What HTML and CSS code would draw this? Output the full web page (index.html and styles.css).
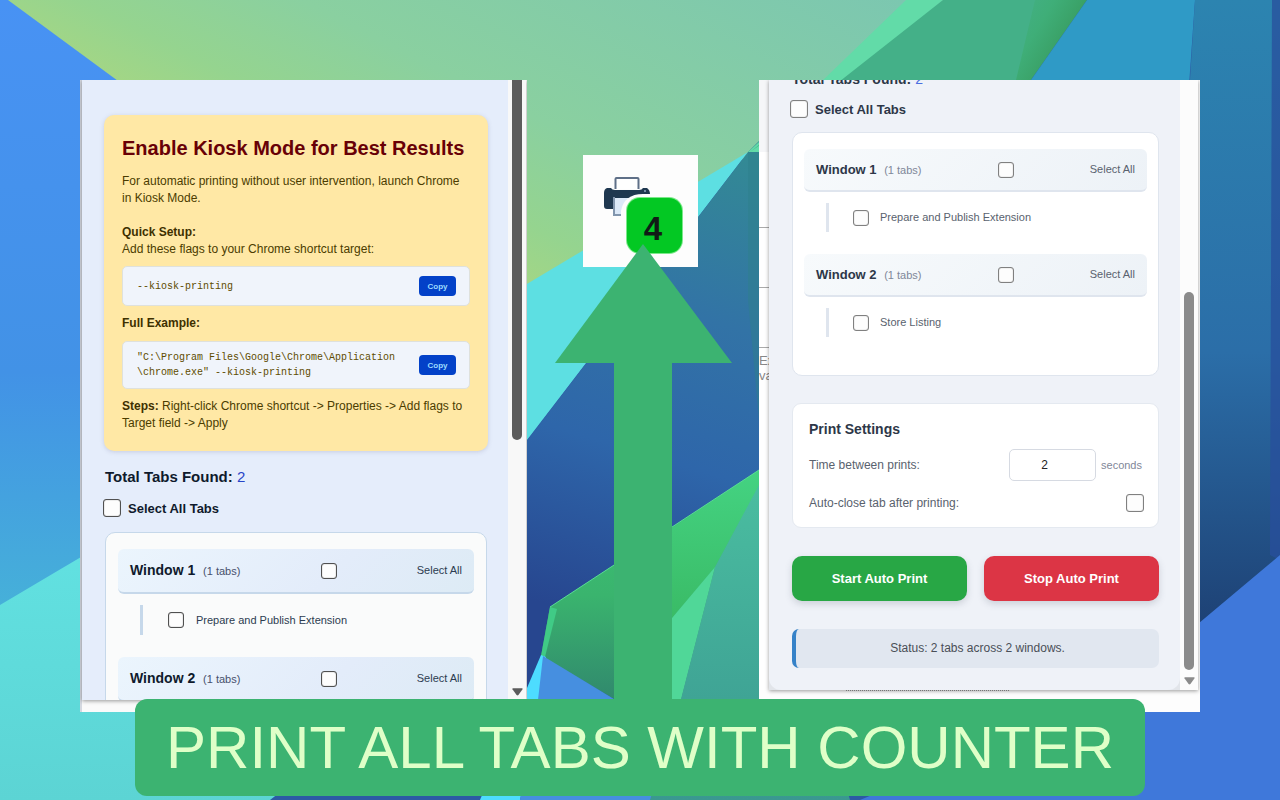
FILE: index.html
```html
<!DOCTYPE html>
<html lang="en">
<head>
<meta charset="utf-8">
<title>Print All Tabs with Counter</title>
<link rel="stylesheet" href="styles.css">
</head>
<body>
<svg class="wallpaper" viewBox="0 0 1280 800" preserveAspectRatio="none" aria-hidden="true">
  <defs>
    <linearGradient id="sky" x1="0" y1="0" x2="0" y2="1"><stop offset="0" stop-color="#4892f4"/><stop offset=".6" stop-color="#4292e6"/><stop offset="1" stop-color="#46b2d8"/></linearGradient>
    <linearGradient id="aqua" x1="0" y1="0" x2="0" y2="1"><stop offset="0" stop-color="#62e2e2"/><stop offset="1" stop-color="#5cd4d4"/></linearGradient>
    <linearGradient id="lime" gradientUnits="userSpaceOnUse" x1="900" y1="0" x2="700" y2="400"><stop offset="0" stop-color="#7cc7b0"/><stop offset=".6" stop-color="#8ad0a0"/><stop offset=".82" stop-color="#95d48f"/><stop offset=".95" stop-color="#a3d685"/></linearGradient>
    <linearGradient id="deep" gradientUnits="userSpaceOnUse" x1="740" y1="150" x2="600" y2="620"><stop offset="0" stop-color="#338a94"/><stop offset=".35" stop-color="#3273a6"/><stop offset=".65" stop-color="#2e66aa"/><stop offset="1" stop-color="#27468f"/></linearGradient>
    <linearGradient id="edge" x1="0" y1="0" x2="0" y2="1"><stop offset="0" stop-color="#2c84b0"/><stop offset=".55" stop-color="#2b6ea8"/><stop offset="1" stop-color="#1d3f72"/></linearGradient>
    <linearGradient id="shard" x1="0" y1="0" x2="0" y2="1"><stop offset="0" stop-color="#3cc474"/><stop offset=".5" stop-color="#3ab46e"/><stop offset="1" stop-color="#2f806d"/></linearGradient>
    <linearGradient id="leaf" x1="0" y1="0" x2="0" y2="1"><stop offset="0" stop-color="#44d382"/><stop offset="1" stop-color="#3abb66"/></linearGradient>
    <linearGradient id="teal" x1="0" y1="0" x2="0" y2="1"><stop offset="0" stop-color="#4abda0"/><stop offset="1" stop-color="#3a9890"/></linearGradient>
    <linearGradient id="rim" gradientUnits="userSpaceOnUse" x1="1000" y1="20" x2="1062" y2="58"><stop offset="0" stop-color="#44b088"/><stop offset=".5" stop-color="#3fae78"/><stop offset="1" stop-color="#389c60"/></linearGradient>
  </defs>
  <rect width="1280" height="800" fill="#2c5aa4"/>
  <polygon points="0,0 200,0 200,620 0,620" fill="url(#sky)"/>
  <polygon points="0,605 130,528 400,700 270,800 0,800" fill="url(#aqua)"/>
  <polygon points="8,0 1000,0 759,150 527,285 300,215" fill="url(#lime)"/>
  <polygon points="500,300 748,152 527,440 500,475" fill="#5ddfe2"/>
  <polygon points="748,152 780,120 780,720 510,720 510,463" fill="url(#deep)"/>
  <polygon points="748,152 759,148 759,420 748,300" fill="#2e7f8c" opacity=".5"/>
  <polygon points="906,0 943,0 759,152 748,152 759,142" fill="#62dba8"/>
  <polygon points="943,0 1040,0 1018,80 853,80 750,152" fill="#44b088"/>
  <polygon points="1035,0 1087,0 1031,80 1016,80" fill="url(#rim)"/>
  <polygon points="1087,0 1195,0 1188,100 1017,100" fill="#2f9ac6"/>
  <polygon points="1195,0 1280,0 1280,640 1180,640 1190,80" fill="url(#edge)"/>
  <polygon points="1272,0 1280,0 1280,560 1270,555" fill="#284f9c" opacity=".75"/>
  <polygon points="1180,639 1280,555 1280,800 860,800 1100,700" fill="#3f78da"/>
  <polygon points="550,607 759,470 759,720 650,720 609,696 541,656" fill="url(#shard)"/>
  <polygon points="550,607 557,609 545,657 541,656" fill="#40cb86"/>
  <polygon points="541,655 546,657 538,720 520,800 480,800 505,740 527,688" fill="#4ddcff"/>
  <polygon points="543,656 614,699 700,800 520,800 538,700" fill="#468fe0"/>
  <polygon points="672,528 759,470 759,486 715,567 672,618" fill="url(#leaf)"/>
  <polygon points="715,567 672,618 650,720 676,720" fill="#50d798"/>
  <polygon points="759,485 715,567 681,699 650,800 850,800" fill="url(#teal)"/>
  <polyline points="550,607 759,470" fill="none" stroke="#58dc94" stroke-width="1"/>
</svg>

<main class="stage">
  <section class="shot shot-left" aria-label="Kiosk mode setup">
    <div class="popup vivid">
      <div class="content">
        <div class="kiosk">
          <h1>Enable Kiosk Mode for Best Results</h1>
          <p class="intro">For automatic printing without user intervention, launch Chrome in Kiosk Mode.</p>
          <p class="setup"><strong>Quick Setup:</strong><br>Add these flags to your Chrome shortcut target:</p>
          <div class="code"><code>--kiosk-printing</code><button type="button">Copy</button></div>
          <p class="example"><strong>Full Example:</strong></p>
          <div class="code"><code>"C:\Program Files\Google\Chrome\Application<br>\chrome.exe" --kiosk-printing</code><button type="button">Copy</button></div>
          <p class="steps"><strong>Steps:</strong> Right-click Chrome shortcut -&gt; Properties -&gt; Add flags to Target field -&gt; Apply</p>
        </div>
        <p class="total">Total Tabs Found: <span>2</span></p>
        <div class="all"><input type="checkbox" id="l-all"><label for="l-all">Select All Tabs</label></div>
        <div class="list">
          <div class="win"><h2>Window 1 <small>(1 tabs)</small></h2><input type="checkbox" id="l-w1"><label for="l-w1">Select All</label></div>
          <div class="tab"><input type="checkbox" id="l-t1"><label for="l-t1">Prepare and Publish Extension</label></div>
          <div class="win"><h2>Window 2 <small>(1 tabs)</small></h2><input type="checkbox" id="l-w2"><label for="l-w2">Select All</label></div>
        </div>
      </div>
      <div class="scroll"><span class="thumb"></span><svg class="down" viewBox="0 0 12 8" aria-hidden="true"><path d="M1 0h10q1 0 .5 1L7 7.400q-1 1-2 0L.5 1Q0 0 1 0z"/></svg></div>
    </div>
  </section>

  <section class="middle" aria-label="Toolbar counter">
    <svg class="toolbar-icon" viewBox="0 0 115 112" role="img" aria-label="Printer with counter">
      <rect width="115" height="112" fill="#fdfdfd"/>
      <path d="M32.500 34V24q0-1 1-1h21q1 0 1 1v10" fill="#fff" stroke="#5f7088" stroke-width="2"/>
      <path d="M24 33h4q1 2 4 2h24q3 0 4-2h4q3 2 3 6v14h-6V43H31v11h-7q-3 0-3-3V38q0-4 3-5z" fill="#1f3850"/>
      <path d="M31 43h28v17H31z" fill="#dce9f8"/>
      <path d="M31 42v18h8" fill="none" stroke="#8296ae" stroke-width="2"/>
      <circle cx="62" cy="36" r="1" fill="#8ea6c0"/>
      <path d="M38 62V56Q41 39 60 39h20v23z" fill="#fdfdfd"/>
      <rect x="43" y="42" width="57" height="57" rx="14" fill="#7be98a"/>
      <rect x="44" y="43" width="55" height="55" rx="13" fill="#03c823"/>
      <text x="70" y="85" class="count">4</text>
    </svg>
    <svg class="arrow-head" viewBox="0 0 177 119" aria-hidden="true"><path d="M88 0 177 119H0z"/></svg>
    <div class="arrow-stem"></div>
  </section>

  <section class="shot shot-right" aria-label="Print controls">
    <div class="behind"><span class="line top"></span><span class="line mid"></span><span class="snippet">Ex<br>va</span></div>
    <div class="popup calm">
      <div class="content">
        <p class="total">Total Tabs Found: <span>2</span></p>
        <div class="all"><input type="checkbox" id="r-all"><label for="r-all">Select All Tabs</label></div>
        <div class="list">
          <div class="win"><h2>Window 1 <small>(1 tabs)</small></h2><input type="checkbox" id="r-w1"><label for="r-w1">Select All</label></div>
          <div class="tab"><input type="checkbox" id="r-t1"><label for="r-t1">Prepare and Publish Extension</label></div>
          <div class="win"><h2>Window 2 <small>(1 tabs)</small></h2><input type="checkbox" id="r-w2"><label for="r-w2">Select All</label></div>
          <div class="tab"><input type="checkbox" id="r-t2"><label for="r-t2">Store Listing</label></div>
        </div>
        <div class="settings">
          <h2>Print Settings</h2>
          <div class="row"><label for="delay">Time between prints:</label><span class="field"><input type="text" inputmode="numeric" id="delay" value="2"><span>seconds</span></span></div>
          <div class="row"><label for="close">Auto-close tab after printing:</label><input type="checkbox" id="close"></div>
        </div>
        <div class="actions"><button type="button" class="start">Start Auto Print</button><button type="button" class="stop">Stop Auto Print</button></div>
        <p class="status">Status: 2 tabs across 2 windows.</p>
      </div>
      <div class="scroll"><span class="thumb"></span><svg class="down" viewBox="0 0 12 8" aria-hidden="true"><path d="M1 0h10q1 0 .5 1L7 7.400q-1 1-2 0L.5 1Q0 0 1 0z"/></svg></div>
    </div>
    <div class="dots"></div>
  </section>
</main>
<footer class="banner">PRINT ALL TABS WITH COUNTER</footer>
</body>
</html>
```
FILE: styles.css
```css
* { box-sizing: border-box; }
html, body { margin: 0; height: 100%; }
body {
  position: relative;
  display: flex;
  flex-direction: column;
  padding: 80px 80px 4px;
  overflow: hidden;
  font: 12px/17px "Liberation Sans", Arial, sans-serif;
}
h1, h2, p { margin: 0; }
button, input { font-family: inherit; margin: 0; }

.wallpaper { position: absolute; inset: 0; width: 100%; height: 100%; z-index: -1; }

.stage {
  flex: 1;
  min-height: 0;
  display: grid;
  grid-template-columns: 447fr 232fr 441fr;
  grid-template-rows: minmax(0, 1fr);
}

/* Captured browser windows */
.shot { background: #fdfdfd; overflow: hidden; min-width: 0; }
.shot-left { padding: 0 1px 12px 2px; background: linear-gradient(90deg, #d4d8e0 0 2px, #fafafa 2px); }
.shot-right {
  display: grid;
  grid-template-columns: 10px minmax(0, 1fr);
  grid-template-rows: minmax(0, 1fr) 22px;
  padding-right: 2px;
}
.popup {
  height: 100%;
  min-height: 0;
  display: flex;
  overflow: hidden;
  box-shadow: 0 1px 4px rgba(0, 0, 0, .4);
}
.content { flex: 1; min-width: 0; }

.vivid {
  --ink: #0f1a2c; --soft: #2c3c50; --dim: #47506c; --line: #c6d8ea; --box: #505050;
  --head: linear-gradient(135deg, #ebf5fd, #e3ecfa 60%, #ddebf5);
  --card: #fafbfb; --bg: #e5edfb; --thumb: #5c5c5c; --track: #f8f8f8; --num: #2744c8;
}
.calm {
  --ink: #2d3748; --soft: #59626e; --dim: #7f8799; --line: #dfe5ee; --box: #808080;
  --head: linear-gradient(135deg, #f7fafc, #edf2f7);
  --card: #fff; --bg: #eff2f8; --thumb: #8b8b8b; --track: #fcfcfc; --num: #4a6ee0;
  background: #e2e5ea;
}
.content { background: var(--bg); }
.vivid .content { padding: 35px 20px 0 22px; }
.calm .content { padding: 0 21px 0 23px; border-radius: 0 0 12px 12px; }

/* Scroll bar */
.scroll {
  width: 18px;
  display: flex;
  flex-direction: column;
  align-items: center;
  background: var(--track);
}
.thumb { width: 10px; background: var(--thumb); }
.vivid .thumb { height: 58%; border-radius: 0 0 5px 5px; }
.calm .thumb { height: 62%; margin-top: auto; border-radius: 5px; }
.down { width: 11px; height: 8px; fill: var(--thumb); }
.vivid .down { margin: auto 0 4px; }
.calm .down { margin: 7px 0 5px; }

/* Kiosk instructions */
.kiosk {
  padding: 18px 18px 19px;
  background: #ffe8a5;
  border-radius: 10px;
  box-shadow: 0 1px 4px rgba(110, 110, 150, .25);
  color: #4b3c00;
}
.kiosk h1 { font-size: 20px; line-height: 30px; color: #680006; white-space: nowrap; }
.intro { margin-top: 10px; }
.setup { margin-top: 17px; }
.kiosk strong { color: #3e3000; }
.example, .steps { margin-top: 9px; }
.code {
  display: flex;
  align-items: center;
  justify-content: space-between;
  min-height: 40px;
  margin-top: 8px;
  padding: 8px 13px 8px 14px;
  background: #f0f4fb;
  border: 1px solid #dfe1dc;
  border-radius: 5px;
}
.code code { font: 10px/15px "Liberation Mono", "Courier New", monospace; color: #5e4c00; white-space: nowrap; }
.code button {
  width: 37px;
  height: 20px;
  padding: 0;
  border: 0;
  border-radius: 4px;
  background: #0341c8;
  color: #9cdcff;
  font-size: 8px;
  font-weight: 700;
}
.example + .code { margin-top: 9px; }

/* Tabs */
.total { font-size: 15px; line-height: 20px; font-weight: 700; color: var(--ink); }
.total span { font-weight: 400; color: var(--num); }
.vivid .total { margin: 16px 0 0 1px; }
.calm .total { margin-top: -11px; font-size: 14px; }
.all {
  display: flex;
  align-items: center;
  gap: 7px;
  height: 20px;
  margin: 11px 0 14px -1px;
  font-size: 13px;
  font-weight: 700;
  color: var(--ink);
}
.calm .all { margin: 10px 0 13px -2px; }
input[type="checkbox"] {
  appearance: none;
  flex: none;
  width: 16px;
  height: 16px;
  border: 1px solid var(--box);
  border-radius: 3px;
  background: #fdfdfd;
  box-shadow: inset 0 0 1px var(--box);
}
.all input[type="checkbox"], .row input[type="checkbox"] { width: 18px; height: 18px; }
.list {
  padding: 16px 11px 38px;
  background: var(--card);
  border: 1px solid var(--line);
  border-radius: 10px;
}
.vivid .list { margin: 0 1px; padding: 16px 12px; }
.win {
  display: flex;
  align-items: center;
  justify-content: space-between;
  height: 43px;
  padding: 0 12px;
  background: var(--head);
  border-bottom: 2px solid var(--line);
  border-radius: 6px;
  color: var(--soft);
  font-size: 11px;
}
.vivid .win { height: 45px; }
.win h2 { font-size: 13px; color: var(--ink); }
.vivid .win h2 { font-size: 14px; }
.win small { margin-left: 4px; font-size: 11px; font-weight: 400; color: var(--dim); }
.tab {
  display: flex;
  align-items: center;
  gap: 11px;
  height: 29px;
  margin: 11px 0 0 22px;
  padding-left: 24px;
  border-left: 3px solid var(--line);
  color: var(--soft);
  font-size: 11px;
}
.vivid .tab { height: 30px; padding-left: 25px; gap: 12px; }
.tab + .win { margin-top: 22px; }

/* Settings */
.settings {
  display: flex;
  flex-direction: column;
  margin-top: 27px;
  padding: 15px 14px 14px 16px;
  background: #fff;
  border: 1px solid #e4e9f0;
  border-radius: 9px;
  color: var(--soft);
}
.settings h2 { margin-bottom: 10px; font-size: 14px; line-height: 20px; color: var(--ink); }
.row { display: flex; align-items: center; justify-content: space-between; min-height: 20px; }
.row + .row { margin-top: 12px; }
.field { display: flex; align-items: center; gap: 5px; padding-right: 2px; font-size: 11px; color: var(--dim); }
.field input {
  width: 87px;
  height: 32px;
  padding: 0 16px 0 0;
  border: 1px solid #d6dae2;
  border-radius: 5px;
  background: #fff;
  color: #222;
  font-size: 12px;
  text-align: center;
}
.actions { display: grid; grid-template-columns: 1fr 1fr; gap: 17px; margin: 28px 0; }
.actions button {
  height: 45px;
  padding: 0;
  border: 0;
  border-radius: 10px;
  color: #fff;
  font-size: 13px;
  font-weight: 700;
  box-shadow: 0 3px 7px rgba(80, 90, 110, .22);
}
.start { background: #28a745; }
.stop { background: #dc3545; }
.status {
  padding: 11px 0;
  background: #e1e7f0;
  border-left: 4px solid #3682c8;
  border-radius: 7px;
  color: #4a4f57;
  text-align: center;
}

/* Page seen behind the right popup */
.behind {
  display: flex;
  flex-direction: column;
  overflow: hidden;
  background: #fff;
  color: #888;
  font-size: 13px;
  line-height: 15px;
}
.line { flex: none; border-bottom: 1px solid #aaa; }
.line.top { height: 148px; background: linear-gradient(#f5f6f8 72px, #fff 72px); }
.line.mid { height: 120px; background: linear-gradient(#fff 59px, #aaa 59px 60px, #fff 60px); }
.snippet { margin-top: 5px; }
.dots { grid-column: 2; width: 163px; height: 1px; margin-left: 77px; border-top: 1px dotted #777; }

/* Counter and arrow */
.middle { display: flex; flex-direction: column; align-items: center; }
.toolbar-icon { flex: none; width: 115px; height: 112px; margin: 75px 5px 0 0; }
.count { font: 700 33px "Liberation Sans", Arial, sans-serif; fill: #111b16; text-anchor: middle; }
.arrow-head { flex: none; width: 177px; height: 119px; margin-top: -23px; fill: #3cb371; }
.arrow-stem { flex: 1; width: 58px; background: #3cb371; }

.banner {
  position: relative;
  margin: -13px 55px 0;
  padding: 14px 0 13px;
  background: #3cb371;
  border-radius: 12px;
  color: #dfffc8;
  font-size: 60px;
  line-height: 70px;
  text-align: center;
  white-space: nowrap;
}
```
